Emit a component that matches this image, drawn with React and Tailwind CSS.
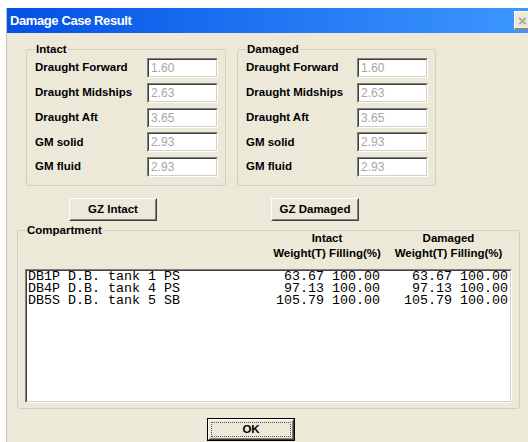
import React from "react";

const intactRows = [
  ["Draught Forward", "1.60"],
  ["Draught Midships", "2.63"],
  ["Draught Aft", "3.65"],
  ["GM solid", "2.93"],
  ["GM fluid", "2.93"],
];

const compartments = [
  ["DB1P D.B. tank 1 PS", "63.67", "100.00", "63.67", "100.00"],
  ["DB4P D.B. tank 4 PS", "97.13", "100.00", "97.13", "100.00"],
  ["DB5S D.B. tank 5 SB", "105.79", "100.00", "105.79", "100.00"],
];

function GroupBox({ label, className, children }) {
  return (
    <div className={`relative border border-[#d0d0bf] rounded-[3px] ${className}`}>
      <span className="absolute left-[8px] top-[-8px] bg-[#ece9d8] px-[1px] leading-[14px] font-bold text-[11.5px] text-black">
        {label}
      </span>
      {children}
    </div>
  );
}

function Sunken({ className, children }) {
  return (
    <div className={`border border-t-[#808080] border-l-[#808080] border-b-white border-r-white ${className}`}>
      <div className="h-full w-full border border-t-[#404040] border-l-[#404040] border-b-[#d4d0c8] border-r-[#d4d0c8] bg-white">
        {children}
      </div>
    </div>
  );
}

function Button({ className, children, isDefault }) {
  if (isDefault) {
    return (
      <div className={`border border-black ${className}`}>
        <div className="h-full border border-t-white border-l-white border-b-[#404040] border-r-[#404040] bg-[#ece9d8]">
          <div className="h-full border border-t-transparent border-l-transparent border-b-[#808080] border-r-[#808080] p-[1px]">
            <div className="h-full border border-dotted border-[#555] flex items-center justify-center font-bold text-[11.5px] text-black">
              {children}
            </div>
          </div>
        </div>
      </div>
    );
  }
  return (
    <div className={`border border-t-white border-l-white border-b-[#404040] border-r-[#404040] bg-[#ece9d8] ${className}`}>
      <div className="h-full border border-t-transparent border-l-transparent border-b-[#808080] border-r-[#808080] flex items-center justify-center font-bold text-[11.5px] text-black">
        {children}
      </div>
    </div>
  );
}

function DraughtPanel({ label, className }) {
  return (
    <GroupBox label={label} className={`h-[137px] ${className}`}>
      <div className="flex flex-col gap-[4.75px] pt-[8px] pl-[8px] pr-[7px]">
        {intactRows.map(([name, value]) => (
          <div key={name} className="flex h-[20px] items-center justify-between">
            <span className="font-bold text-[11.5px] text-black">{name}</span>
            <Sunken className="w-[71px] h-[20px]">
              <span className="block pl-[2px] text-[12px] leading-[16px] text-[#a6a6a6]">{value}</span>
            </Sunken>
          </div>
        ))}
      </div>
    </GroupBox>
  );
}

export default function App() {
  return (
    <div className="w-[528px] h-[442px] overflow-hidden bg-white pt-[8px] pl-[6px] font-['Liberation_Sans',Arial,sans-serif]">
      <div className="h-full flex flex-col border-l border-[#c9c6b8]">
        {/* title bar */}
        <div className="h-[25px] shrink-0 flex items-center justify-between overflow-hidden bg-gradient-to-r from-[#0450e4] to-[#3d97ff] pl-[3px]">
          <span className="text-white font-bold text-[13px] tracking-[-0.4px]">Damage Case Result</span>
          <div className="mr-[-2px] w-[16px] h-[19px] flex items-center justify-center bg-[#ece9d8] border-t border-l border-t-white border-l-white border-b-2 border-b-[#8c8a7e] text-[#a8a69a] text-[15px] font-bold leading-none">
            ×
          </div>
        </div>

        {/* dialog body */}
        <div className="flex-1 bg-[#ece9d8] flex flex-col">
          <div className="flex gap-[11px] pt-[16px] pl-[19px]">
            <DraughtPanel label="Intact" className="w-[200px]" />
            <DraughtPanel label="Damaged" className="w-[199px]" />
          </div>

          <div className="flex mt-[12px] ml-[62px] gap-[114px]">
            <Button className="w-[88px] h-[23px]">GZ Intact</Button>
            <Button className="w-[88px] h-[23px]">GZ Damaged</Button>
          </div>

          <GroupBox label="Compartment" className="mt-[9px] ml-[10px] w-[503px] h-[179px]">
            <div className="flex ml-[253px] gap-[9px] font-bold text-[11.5px] leading-[15px] text-black">
              <div className="w-[112px] flex flex-col items-center">
                <span>Intact</span>
                <span className="whitespace-pre">Weight(T) Filling(%)</span>
              </div>
              <div className="w-[113px] flex flex-col items-center">
                <span>Damaged</span>
                <span className="whitespace-pre">Weight(T) Filling(%)</span>
              </div>
            </div>
            <Sunken className="mt-[8px] ml-[7px] w-[487px] h-[134px]">
              {/* one row per compartment: name, then intact and damaged columns */}
              <div className="pl-[1px] font-['Liberation_Mono','Courier_New',monospace] text-[13.33px] leading-[12px] text-black whitespace-pre">
                {compartments.map(([name, w1, f1, w2, f2]) => (
                  <div key={name} className="flex h-[12px]">
                    <span className="w-[240px]">{name}</span>
                    <span className="w-[112px] text-right">{`${w1} ${f1}`}</span>
                    <span className="w-[128px] text-right">{`${w2} ${f2}`}</span>
                  </div>
                ))}
              </div>
            </Sunken>
          </GroupBox>

          <Button isDefault className="mt-[9px] ml-[200px] w-[88px] h-[23px]">OK</Button>
        </div>
      </div>
    </div>
  );
}
